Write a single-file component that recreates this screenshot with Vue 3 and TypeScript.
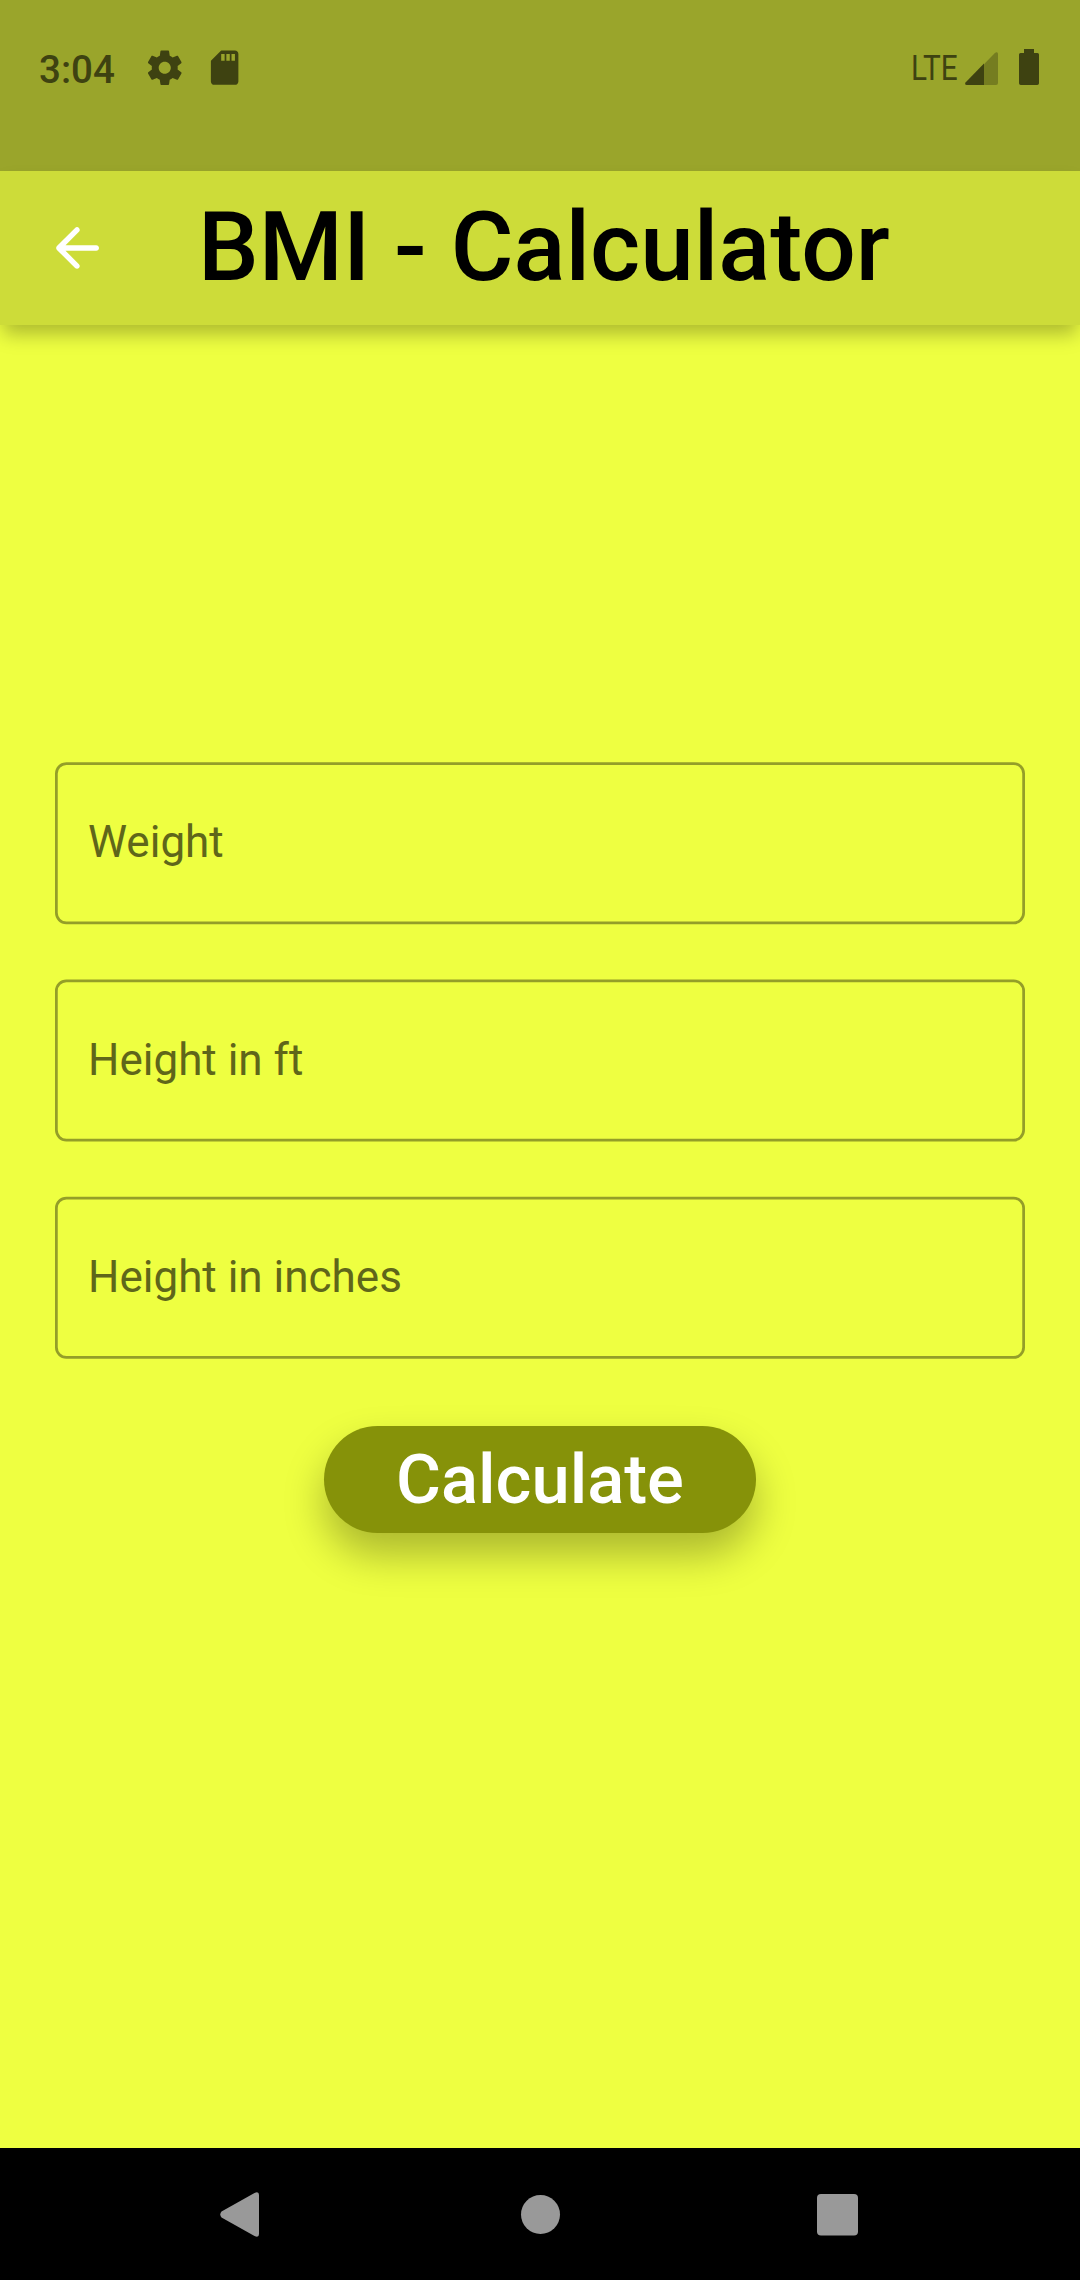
<script setup lang="ts">
import { ref } from 'vue'

interface Field {
  id: string
  label: string
}

const fields: Field[] = [
  { id: 'weight', label: 'Weight' },
  { id: 'feet', label: 'Height in ft' },
  { id: 'inches', label: 'Height in inches' },
]

const time = ref('3:04')
</script>

<template>
  <div class="screen">
    <div class="status">
      <div class="status-left">
        <span class="time">{{ time }}</span>
        <svg class="gear" viewBox="0 0 24 24">
          <path d="M19.43 12.98c.04-.32.07-.64.07-.98s-.03-.66-.07-.98l2.11-1.65c.19-.15.24-.42.12-.64l-2-3.46c-.12-.22-.39-.3-.61-.22l-2.49 1c-.52-.4-1.08-.73-1.69-.98l-.38-2.65C14.46 2.18 14.25 2 14 2h-4c-.25 0-.46.18-.49.42l-.38 2.65c-.61.25-1.17.59-1.69.98l-2.49-1c-.23-.09-.49 0-.61.22l-2 3.46c-.13.22-.07.49.12.64l2.11 1.65c-.04.32-.07.65-.07.98s.03.66.07.98l-2.11 1.65c-.19.15-.24.42-.12.64l2 3.46c.12.22.39.3.61.22l2.49-1c.52.4 1.08.73 1.69.98l.38 2.65c.03.24.24.42.49.42h4c.25 0 .46-.18.49-.42l.38-2.65c.61-.25 1.17-.59 1.69-.98l2.49 1c.23.09.49 0 .61-.22l2-3.46c.12-.22.07-.49-.12-.64l-2.11-1.65zM12 15.5c-1.93 0-3.5-1.57-3.5-3.5s1.57-3.5 3.5-3.5 3.5 1.57 3.5 3.5-1.57 3.5-3.5 3.5z" />
        </svg>
        <svg class="sd" viewBox="0 0 24 24">
          <path d="M18 2h-8L4.02 8 4 20c0 1.1.9 2 2 2h12c1.1 0 2-.9 2-2V4c0-1.1-.9-2-2-2zm-6 6h-2V4h2v4zm3 0h-2V4h2v4zm3 0h-2V4h2v4z" />
        </svg>
      </div>
      <div class="status-right">
        <span class="lte">LTE</span>
        <svg class="signal" width="33" height="33" viewBox="0 0 33 33">
          <path d="M19 12.2 29.9 1Q31 0 32 .2 33 .6 33 2V31Q33 33 31 33H19Z" opacity=".4" />
          <path d="M19 11.5V33H1.6Q-.6 32.6 .5 30.4Z" />
        </svg>
        <svg class="battery" width="20" height="36" viewBox="0 0 20 36">
          <path d="M5 0H15V4H18.5Q20 4 20 5.5V34.2Q20 36 18.2 36H1.8Q0 36 0 34.2V5.5Q0 4 1.5 4H5Z" />
        </svg>
      </div>
    </div>

    <header class="appbar">
      <svg class="back" viewBox="0 0 24 24">
        <path d="M19 11H7.83l4.88-4.88c.39-.39.39-1.03 0-1.42-.39-.39-1.02-.39-1.41 0l-6.59 6.59c-.39.39-.39 1.02 0 1.41l6.59 6.59c.39.39 1.02.39 1.41 0 .39-.39.39-1.02 0-1.41L7.83 13H19c.55 0 1-.45 1-1s-.45-1-1-1z" />
      </svg>
      <h1 class="title">BMI - Calculator</h1>
    </header>

    <main class="body">
      <div class="form">
        <label v-for="(field, index) in fields" :key="field.id" class="field">
          <svg class="outline" width="970" height="163">
            <rect x="1.375" :y="1.6 + index * 0.25" width="967.25" height="159.25" rx="10" />
          </svg>
          <span class="label">{{ field.label }}</span>
        </label>
      </div>
      <button class="calculate" type="button">Calculate</button>
    </main>

    <nav class="navbar">
      <svg width="1080" height="132" viewBox="0 0 1080 132">
        <path d="M221.5 63.5 254.5 45Q259 43 259 47V86Q259 90 254.5 88L221.5 69.5Q219 66.5 221.5 63.5Z" />
        <circle cx="540.5" cy="66.5" r="19.5" />
        <rect x="817" y="46" width="41" height="41.5" rx="4" />
      </svg>
    </nav>
  </div>
</template>

<style>
body {
  margin: 0;
}
</style>

<style scoped>
.screen {
  display: flex;
  flex-direction: column;
  width: 1080px;
  height: 2280px;
  overflow: hidden;
  background: #eeff41;
  font-family: Roboto, sans-serif;
}
.status {
  display: flex;
  justify-content: space-between;
  box-sizing: border-box;
  height: 171px;
  padding: 0 41px 0 39px;
  background: #9aa52b;
  color: #3e4211;
  fill: #3e4211;
}
.status-left,
.status-right {
  display: flex;
  align-items: flex-start;
}
.time {
  width: 78px;
  margin-top: 47px;
  font-size: 38.5px;
  font-weight: 500;
  line-height: 45px;
}
.gear {
  width: 41.5px;
  height: 41.5px;
  margin: 46.5px 0 0 26.5px;
}
.sd {
  width: 41.25px;
  height: 41.25px;
  margin: 46.5px 0 0 19px;
}
.lte {
  width: 54px;
  margin-top: 48px;
  font-size: 35px;
  line-height: 41px;
  transform: scaleX(0.85);
  transform-origin: left;
}
.signal {
  margin-top: 52px;
  overflow: visible;
}
.battery {
  margin: 49px 0 0 21px;
}
.appbar {
  display: flex;
  align-items: center;
  height: 154px;
  padding-left: 44px;
  background: #cddc39;
  box-shadow: 0 12px 18px -3px rgba(0, 0, 0, 0.27);
}
.back {
  width: 66px;
  height: 66px;
  fill: #fff;
}
.title {
  margin: -2px 0 0 88px;
  color: #000;
  font-size: 96.25px;
  font-weight: 500;
  line-height: 113px;
  white-space: nowrap;
}
.body {
  display: flex;
  flex: 1;
  flex-direction: column;
  align-items: center;
  padding-top: 437px;
}
.form {
  display: flex;
  flex-direction: column;
  gap: 55px;
}
.field {
  display: flex;
  position: relative;
  align-items: center;
  box-sizing: border-box;
  width: 970px;
  height: 162px;
  padding-left: 33px;
}
.outline {
  position: absolute;
  inset: 0;
  fill: none;
  stroke: #949e28;
  stroke-width: 2.75;
}
.label {
  margin-top: -2px;
  color: #5f661a;
  font-size: 44px;
  line-height: 52px;
}
.field + .field .label {
  margin-top: 0;
}
.calculate {
  width: 432px;
  height: 107px;
  margin-top: 68px;
  padding: 0;
  border: 0;
  border-radius: 54px;
  background: #869209;
  color: #fff;
  font-family: inherit;
  font-size: 68.75px;
  font-weight: 500;
  line-height: 81px;
  box-shadow: 0 22px 40px rgba(0, 0, 0, 0.28);
}
.navbar {
  height: 132px;
  background: #000;
}
.navbar svg {
  display: block;
  fill: #999;
}
</style>
